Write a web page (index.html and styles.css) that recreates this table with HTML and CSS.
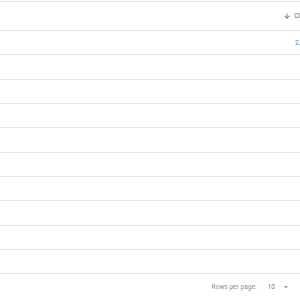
FILE: index.html
```html
<!DOCTYPE html>
<html>
<head>
<meta charset="utf-8">
<link rel="stylesheet" href="styles.css">
</head>
<body>
<div class="grid">
  <div class="header">
    <div class="hcell">
      <svg class="sort" viewBox="0 0 24 24" width="8" height="8"><path d="M20 12l-1.41-1.41L13 16.17V4h-2v12.17l-5.58-5.59L4 12l8 8 8-8z" fill="#555"/></svg>
      <span class="htext">Closed</span>
    </div>
  </div>
  <div class="rows">
    <div class="row"><span class="val">2,345</span></div>
    <div class="row"></div>
    <div class="row"></div>
    <div class="row"></div>
    <div class="row"></div>
    <div class="row"></div>
    <div class="row"></div>
    <div class="row"></div>
    <div class="row"></div>
    <div class="row"></div>
  </div>
  <div class="footer">
    <span class="label">Rows per page:</span>
    <span class="select">10
      <svg class="caret" viewBox="0 0 24 24" width="10" height="10"><path d="M7 10l5 5 5-5z" fill="#8a8a8a"/></svg>
    </span>
  </div>
</div>
</body>
</html>
```
FILE: styles.css
```css
html, body {
  margin: 0;
  padding: 0;
  background: #fff;
  overflow: hidden;
}
body {
  font-family: Roboto, "Liberation Sans", sans-serif;
  width: 300px;
  height: 300px;
}
.grid {
  margin-top: 1px;
  border-top: 1px solid #e6e6e6;
  width: 300px;
}
.header {
  box-sizing: border-box;
  height: 29px;
  border-bottom: 1px solid #e6e6e6;
  display: flex;
  align-items: center;
  overflow: hidden;
}
.hcell {
  margin-left: 283px;
  display: flex;
  align-items: center;
  gap: 3px;
  white-space: nowrap;
  font-size: 6.6px;
  font-weight: 400;
  color: rgba(0,0,0,0.7);
}
.sort {
  flex: none;
}
.rows {
  display: flex;
  flex-direction: column;
}
.row {
  box-sizing: border-box;
  height: 24.33px;
  border-bottom: 1px solid #e6e6e6;
  display: flex;
  align-items: center;
  justify-content: flex-start;
  overflow: hidden;
  font-size: 6.6px;
  white-space: nowrap;
}
.val {
  margin-left: 295px;
  color: #3b8ad9;
}
.footer {
  height: 26px;
  display: flex;
  align-items: center;
  justify-content: flex-end;
  font-size: 6.6px;
  color: rgba(0,0,0,0.5);
  padding-right: 9px;
}
.label {
  margin-right: 11px;
}
.select {
  display: flex;
  align-items: center;
  gap: 6px;
  color: rgba(0,0,0,0.6);
}
.caret {
  flex: none;
}
```
